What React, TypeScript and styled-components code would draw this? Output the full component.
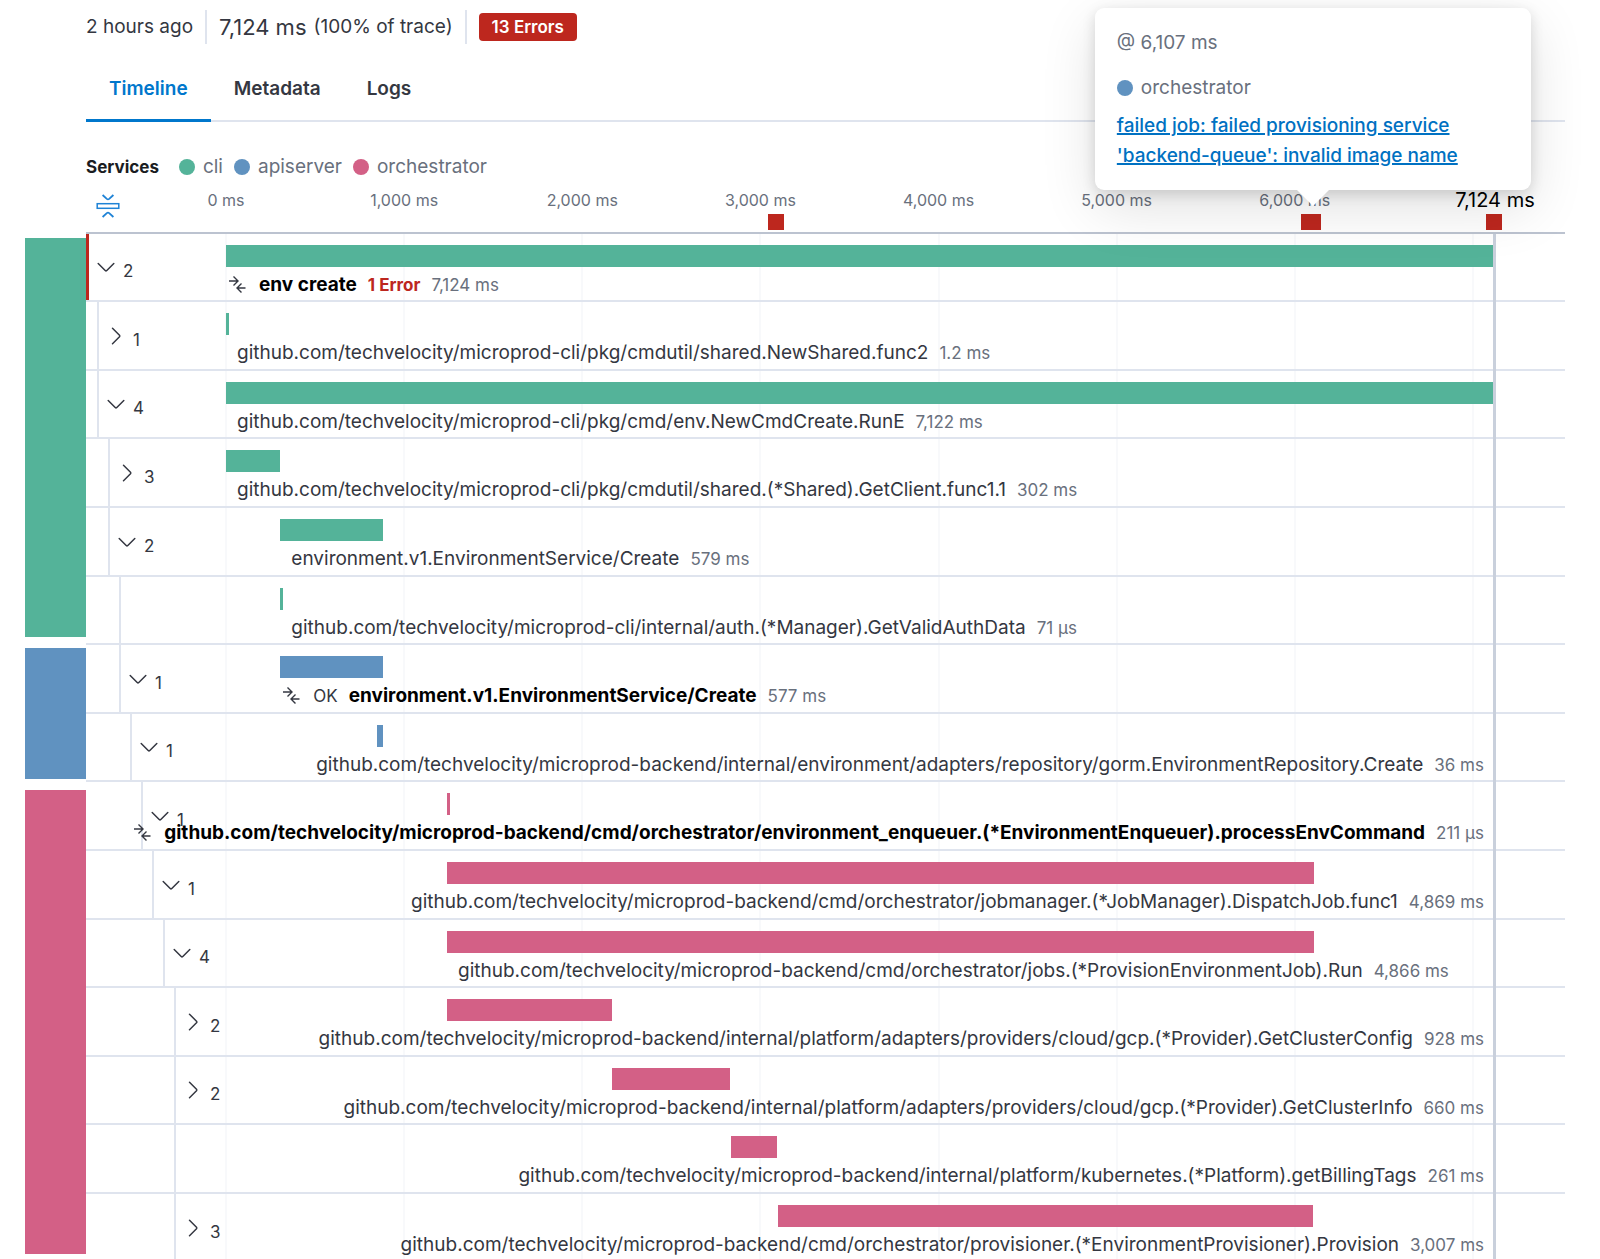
import React from "react";
import styled, { createGlobalStyle, css } from "styled-components";

const color = {
  text: "#343741",
  title: "#1a1c21",
  subdued: "#69707d",
  link: "#0071c2",
  line: "#dfe4ee",
  danger: "#bd271e",
  cli: "#54b399",
  apiserver: "#6092c0",
  orchestrator: "#d36086",
};

const TOTAL = 7124;
const percent = (ms: number) => `${(ms / TOTAL) * 100}%`;

const GlobalStyle = createGlobalStyle`
  * { box-sizing: border-box; }
  body {
    margin: 0;
    background: #fff;
    color: ${color.text};
    font-family: Inter, "Noto Sans", sans-serif;
    font-size: 19px;
    line-height: 30px;
  }
  button { font: inherit; color: inherit; background: none; border: 0; padding: 0; cursor: pointer; }
`;

const Page = styled.main`
  height: 100vh;
  overflow: hidden;
  padding: 10px 35px 0 25px;
`;

const Content = styled.div`
  margin-left: 61px;
`;

const Summary = styled.div`
  display: flex;
  align-items: center;
  height: 34px;
`;

const SummaryItem = styled.div`
  display: flex;
  align-items: center;
  gap: 7px;
  height: 34px;
  & + & {
    margin-left: 12px;
    padding-left: 12px;
    border-left: 2px solid ${color.line};
  }
`;

const TraceDuration = styled.span`
  font-size: 22px;
`;

const Badge = styled.span`
  padding: 0 13px;
  border-radius: 4px;
  background: ${color.danger};
  color: #fff;
  font-size: 17px;
  font-weight: 600;
  line-height: 28px;
`;

const Tabs = styled.div`
  display: flex;
  margin-top: 11px;
  border-bottom: 2px solid ${color.line};
`;

const Tab = styled.button<{ $active?: boolean }>`
  height: 67px;
  margin-bottom: -2px;
  padding: 4px 23px 0;
  border-bottom: 3px solid ${(p) => (p.$active ? "#0077cc" : "transparent")};
  color: ${(p) => (p.$active ? "#0077cc" : color.text)};
  font-weight: 600;
`;

const Legend = styled.div`
  display: flex;
  align-items: center;
  gap: 11px;
  margin-top: 30px;
`;

const LegendTitle = styled.h2`
  margin: 0 9px 0 0;
  color: ${color.title};
  font-size: 17px;
  font-weight: 700;
`;

const LegendItem = styled.span`
  display: flex;
  align-items: center;
  gap: 8px;
  color: ${color.subdued};
`;

const Dot = styled.i<{ $color: string }>`
  width: 16px;
  height: 16px;
  border-radius: 50%;
  background: ${(p) => p.$color};
`;

const Axis = styled.div`
  display: flex;
  height: 52px;
  border-bottom: 2px solid #bcc3d0;
`;

const Gutter = styled.div`
  flex: none;
  width: 140px;
`;

const FoldButton = styled.button`
  display: flex;
  margin: 12px 0 0 10px;
  color: #1f83d6;
`;

const Scale = styled.div`
  position: relative;
  flex: 1;
  margin-right: 70px;
`;

const Tick = styled.span<{ $end?: boolean }>`
  position: absolute;
  top: 3px;
  transform: translateX(-50%);
  white-space: nowrap;
  color: ${(p) => (p.$end ? "#000" : color.subdued)};
  font-size: ${(p) => (p.$end ? 20 : 16)}px;
`;

const Marker = styled.div`
  position: absolute;
  bottom: 2px;
  width: 16px;
  height: 16px;
  margin-left: -9px;
`;

const MarkerButton = styled.button`
  display: block;
  width: 16px;
  height: 16px;
  background: ${color.danger};
`;

const Tooltip = styled.div`
  position: absolute;
  z-index: 5;
  left: 50%;
  bottom: 40px;
  width: 436px;
  padding: 20px 22px 19px;
  transform: translateX(-50%);
  border-radius: 9px;
  background: #fff;
  color: ${color.subdued};
  box-shadow: 0 4px 14px rgba(0, 0, 0, 0.14), 0 18px 56px rgba(0, 0, 0, 0.12);
  &::after {
    content: "";
    position: absolute;
    top: 100%;
    left: 50%;
    margin-left: -16px;
    border: 16px solid transparent;
    border-bottom: 0;
    border-top-color: #fff;
  }
`;

const TooltipTime = styled.div`
  margin-bottom: 15px;
`;

const ErrorLink = styled.a`
  display: block;
  margin-top: 8px;
  color: ${color.link};
  font-weight: 500;
  text-decoration: underline;
  text-decoration-thickness: 2px;
`;

const Waterfall = styled.div`
  display: flex;
  align-items: flex-start;
`;

const Blocks = styled.div`
  display: flex;
  flex: none;
  flex-direction: column;
  gap: 11px;
  width: 61px;
  padding-top: 4px;
`;

const Block = styled.div<{ $color: string; $height: number }>`
  height: ${(p) => p.$height}px;
  background: ${(p) => p.$color};
`;

const Rows = styled.div`
  position: relative;
  isolation: isolate;
  flex: 1;
  display: grid;
  grid-template-columns: minmax(0, 1fr);
  grid-auto-rows: 68px 69px 68px 69px 69px;
  min-width: 0;
`;

const GridLines = styled.div<{ $behind?: boolean }>`
  position: absolute;
  z-index: ${(p) => (p.$behind ? -1 : 1)};
  inset: 0 70px 0 140px;
  pointer-events: none;
`;

const GridLine = styled.span<{ $end?: boolean }>`
  position: absolute;
  top: 0;
  bottom: 0;
  width: ${(p) => (p.$end ? 3 : 2)}px;
  margin-left: ${(p) => (p.$end ? -2 : -1)}px;
  background: ${(p) => (p.$end ? "#c9d0dc" : "#f8f9fb")};
`;

const Row = styled.div`
  display: flex;
  border-bottom: 2px solid ${color.line};
`;

const ToggleCell = styled.div<{ $depth: number }>`
  flex: none;
  display: flex;
  align-items: center;
  width: ${(p) => 140 - p.$depth * 11}px;
  margin-left: ${(p) => p.$depth * 11}px;
  padding-left: 6px;
  ${(p) =>
    p.$depth === 0
      ? css`border-left: 3px solid ${color.danger};`
      : css`border-left: 2px solid ${color.line};`}
`;

const Toggle = styled.button`
  display: flex;
  align-items: center;
  gap: 6px;
`;

const Count = styled.span`
  padding-top: 8px;
  font-size: 17px;
`;

const Track = styled.div`
  position: relative;
  flex: 1;
  display: flex;
  flex-direction: column;
  min-width: 0;
  margin-right: 70px;
  padding-top: 11px;
`;

const Bar = styled.div<{ $color: string }>`
  flex: none;
  height: 22px;
  min-width: 3px;
  background: ${(p) => p.$color};
`;

const LabelLine = styled.div`
  flex: 1;
  display: flex;
  align-items: center;
  justify-content: flex-end;
  padding-top: 2px;
  white-space: nowrap;
  &::after {
    content: "";
    flex: 1 1 0;
  }
`;

const Offset = styled.span`
  flex-shrink: 1;
  min-width: 0;
`;

const Label = styled.div`
  flex: none;
  display: flex;
  align-items: center;
  padding-right: 11px;
`;

const Name = styled.span<{ $root?: boolean }>`
  margin-left: 11px;
  ${(p) => p.$root && css`color: #000; font-weight: 700;`}
`;

const Status = styled.span`
  margin-left: 11px;
  font-size: 17px;
`;

const ErrorCount = styled.strong`
  margin-left: 11px;
  color: ${color.danger};
  font-size: 17px;
  font-weight: 700;
`;

const Duration = styled.span`
  margin-left: 11px;
  color: ${color.subdued};
  font-size: 17px;
`;

const FoldIcon = () => (
  <svg width="24" height="24" viewBox="0 0 24 24" fill="none" stroke="currentColor" strokeWidth="1.8" aria-hidden="true">
    <rect x="1.2" y="9.7" width="21.6" height="4.6" strokeWidth="1.5" />
    <path d="M6.6 1l4.200 3.900q1.200 1 2.400 0l4.200-3.900M6.600 23l4.200-3.900q1.200-1 2.400 0l4.200 3.900" />
  </svg>
);

const Chevron = ({ open }: { open: boolean }) => (
  <svg width="22" height="22" viewBox="0 0 22 22" fill="none" stroke="currentColor" strokeWidth="1.5" strokeLinecap="round" strokeLinejoin="round" aria-hidden="true">
    <path d={open ? "M3.2 7.5l7 7q.8.700 1.600 0l7-7" : "M7.5 3.2l7 7q.7.800 0 1.600l-7 7"} />
  </svg>
);

const MergeIcon = () => (
  <svg width="22" height="22" viewBox="0 0 22 22" fill="none" stroke="currentColor" strokeWidth="1.4" aria-hidden="true">
    <path d="M3 7h8.500M7.500 2.500l4.500 4.500-4.500 4.500M19.500 14h-8.500M15.500 9.500l-4.500 4.500 4.500 4.500" />
  </svg>
);

type Service = "cli" | "apiserver" | "orchestrator";

type Span = {
  service: Service;
  depth: number;
  name: string;
  start: number;
  ms: number;
  duration: string;
  children?: number;
  open?: boolean;
  root?: boolean;
  status?: string;
  errors?: string;
};

const repo = "github.com/techvelocity/microprod-";

const spans: Span[] = [
  { service: "cli", depth: 0, name: "env create", start: 0, ms: 7124, duration: "7,124 ms", children: 2, open: true, root: true, errors: "1 Error" },
  { service: "cli", depth: 1, name: repo + "cli/pkg/cmdutil/shared.NewShared.func2", start: 0, ms: 1.2, duration: "1.2 ms", children: 1 },
  { service: "cli", depth: 1, name: repo + "cli/pkg/cmd/env.NewCmdCreate.RunE", start: 0, ms: 7122, duration: "7,122 ms", children: 4, open: true },
  { service: "cli", depth: 2, name: repo + "cli/pkg/cmdutil/shared.(*Shared).GetClient.func1.1", start: 0, ms: 302, duration: "302 ms", children: 3 },
  { service: "cli", depth: 2, name: "environment.v1.EnvironmentService/Create", start: 305, ms: 579, duration: "579 ms", children: 2, open: true },
  { service: "cli", depth: 3, name: repo + "cli/internal/auth.(*Manager).GetValidAuthData", start: 305, ms: 0.071, duration: "71 μs" },
  { service: "apiserver", depth: 3, name: "environment.v1.EnvironmentService/Create", start: 305, ms: 577, duration: "577 ms", children: 1, open: true, root: true, status: "OK" },
  { service: "apiserver", depth: 4, name: repo + "backend/internal/environment/adapters/repository/gorm.EnvironmentRepository.Create", start: 846, ms: 36, duration: "36 ms", children: 1, open: true },
  { service: "orchestrator", depth: 5, name: repo + "backend/cmd/orchestrator/environment_enqueuer.(*EnvironmentEnqueuer).processEnvCommand", start: 1241, ms: 0.211, duration: "211 μs", children: 1, open: true, root: true },
  { service: "orchestrator", depth: 6, name: repo + "backend/cmd/orchestrator/jobmanager.(*JobManager).DispatchJob.func1", start: 1241, ms: 4869, duration: "4,869 ms", children: 1, open: true },
  { service: "orchestrator", depth: 7, name: repo + "backend/cmd/orchestrator/jobs.(*ProvisionEnvironmentJob).Run", start: 1241, ms: 4866, duration: "4,866 ms", children: 4, open: true },
  { service: "orchestrator", depth: 8, name: repo + "backend/internal/platform/adapters/providers/cloud/gcp.(*Provider).GetClusterConfig", start: 1241, ms: 928, duration: "928 ms", children: 2 },
  { service: "orchestrator", depth: 8, name: repo + "backend/internal/platform/adapters/providers/cloud/gcp.(*Provider).GetClusterInfo", start: 2169, ms: 660, duration: "660 ms", children: 2 },
  { service: "orchestrator", depth: 8, name: repo + "backend/internal/platform/kubernetes.(*Platform).getBillingTags", start: 2835, ms: 261, duration: "261 ms" },
  { service: "orchestrator", depth: 8, name: repo + "backend/cmd/orchestrator/provisioner.(*EnvironmentProvisioner).Provision", start: 3098, ms: 3007, duration: "3,007 ms", children: 3 },
];

const ticks = [0, 1000, 2000, 3000, 4000, 5000, 6000];
const errorsAt = [3096, 6085, 6107, 7124];
const services: Service[] = ["cli", "apiserver", "orchestrator"];

const SpanRow = ({ span }: { span: Span }) => (
  <Row>
    <ToggleCell $depth={span.depth}>
      {span.children && (
        <Toggle aria-expanded={!!span.open}>
          <Chevron open={!!span.open} />
          <Count>{span.children}</Count>
        </Toggle>
      )}
    </ToggleCell>
    <Track>
      <Bar $color={color[span.service]} style={{ marginLeft: percent(span.start), width: percent(span.ms) }} />
      <LabelLine>
        <Offset style={{ flexBasis: percent(span.start) }} />
        <Label>
          {span.root && <MergeIcon />}
          {span.status && <Status>{span.status}</Status>}
          <Name $root={span.root}>{span.name}</Name>
          {span.errors && <ErrorCount>{span.errors}</ErrorCount>}
          <Duration>{span.duration}</Duration>
        </Label>
      </LabelLine>
    </Track>
  </Row>
);

export default function App() {
  return (
    <Page>
      <GlobalStyle />
      <Content>
        <Summary>
          <SummaryItem>2 hours ago</SummaryItem>
          <SummaryItem>
            <TraceDuration>7,124 ms</TraceDuration>
            <span>(100% of trace)</span>
          </SummaryItem>
          <SummaryItem>
            <Badge>13 Errors</Badge>
          </SummaryItem>
        </Summary>
        <Tabs role="tablist">
          <Tab role="tab" aria-selected $active>Timeline</Tab>
          <Tab role="tab" aria-selected={false}>Metadata</Tab>
          <Tab role="tab" aria-selected={false}>Logs</Tab>
        </Tabs>
        <Legend>
          <LegendTitle>Services</LegendTitle>
          {services.map((s) => (
            <LegendItem key={s}>
              <Dot $color={color[s]} />
              {s}
            </LegendItem>
          ))}
        </Legend>
        <Axis>
          <Gutter>
            <FoldButton aria-label="Collapse all">
              <FoldIcon />
            </FoldButton>
          </Gutter>
          <Scale>
            {ticks.map((t) => (
              <Tick key={t} style={{ left: percent(t) }}>
                {t.toLocaleString("en-US")} ms
              </Tick>
            ))}
            <Tick $end style={{ left: "100%" }}>7,124 ms</Tick>
            {errorsAt.map((t) => (
              <Marker key={t} style={{ left: percent(t) }}>
                <MarkerButton aria-label={`Error at ${t} ms`} />
                {t === 6107 && (
                  <Tooltip role="tooltip">
                    <TooltipTime>@ 6,107 ms</TooltipTime>
                    <LegendItem>
                      <Dot $color={color.apiserver} />
                      orchestrator
                    </LegendItem>
                    <ErrorLink href="#error">
                      failed job: failed provisioning service 'backend-queue': invalid image name
                    </ErrorLink>
                  </Tooltip>
                )}
              </Marker>
            ))}
          </Scale>
        </Axis>
      </Content>
      <Waterfall>
        <Blocks>
          <Block $color={color.cli} $height={399} />
          <Block $color={color.apiserver} $height={131} />
          <Block $color={color.orchestrator} $height={464} />
        </Blocks>
        <Rows>
          <GridLines $behind>
            {[...ticks, 7000].map((t) => (
              <GridLine key={t} style={{ left: percent(t) }} />
            ))}
          </GridLines>
          {spans.map((span, i) => (
            <SpanRow key={i} span={span} />
          ))}
          <GridLines>
            <GridLine $end style={{ left: "100%" }} />
          </GridLines>
        </Rows>
      </Waterfall>
    </Page>
  );
}
